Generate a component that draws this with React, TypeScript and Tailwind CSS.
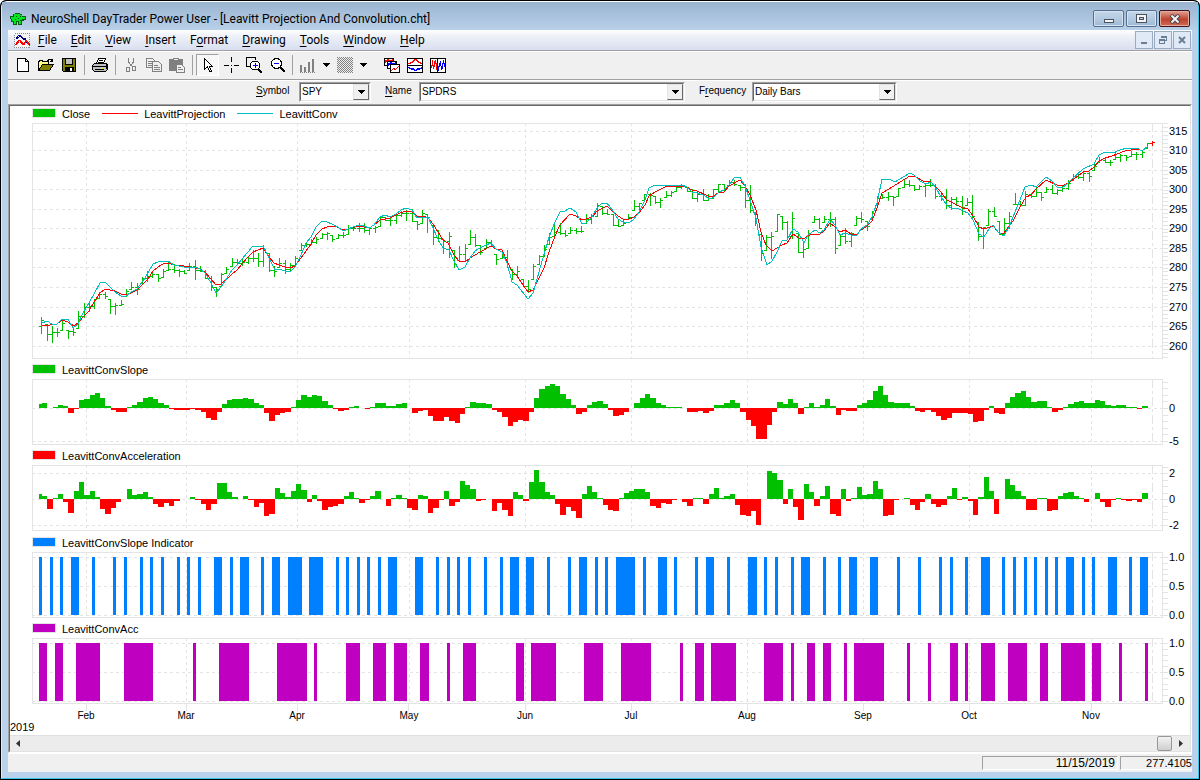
import type { ReactNode } from 'react';

// Chart space: x runs 32..1163, one session every 5.29 units
const STEP = 5.29;
const LEFT = 32;
const WIDTH = 1131;
const SESSIONS = 210;
const LAST_X = 1152;

const tickX = (i: number) => Math.round(41.3 + STEP * i);
const edgeX = (i: number) => Math.round(42 + STEP * i);
const priceY = (p: number) => Math.floor(131.3 + (315 - p) * 3.905);

const months = [
  { label: 'Feb', start: 9 },
  { label: 'Mar', start: 28 },
  { label: 'Apr', start: 49 },
  { label: 'May', start: 70 },
  { label: 'Jun', start: 92 },
  { label: 'Jul', start: 112 },
  { label: 'Aug', start: 134 },
  { label: 'Sep', start: 156 },
  { label: 'Oct', start: 176 },
  { label: 'Nov', start: 199 },
].map((m) => ({ ...m, x: Math.floor(38.7 + STEP * m.start) }));

// [high, low, close] per session
const bars = [
  [267.2, 263.2, 266.5], [265.5, 261.4, 262.9], [264.9, 261, 263.4], [264.5, 262.5, 263.6], [266.7, 264, 265.8],
  [264, 262, 263.8], [264.7, 262.6, 263.4], [268.8, 264.5, 267.6], [270.8, 267.2, 269.9], [271.3, 268.9, 270.1],
  [272, 269.5, 272], [273.6, 272.1, 273.1], [273.7, 272.1, 272.7], [271.8, 268.4, 270.1], [270.8, 268.1, 270.5],
  [271.6, 270.4, 270.6], [274.6, 272.7, 274.1], [276.3, 274.4, 275], [275.9, 273.3, 274.4], [277.5, 276.1, 277.4],
  [279, 276.5, 277.9], [279.2, 277.6, 278.4], [278.3, 276.5, 277.4], [279.5, 277.6, 279.1], [281.4, 279.4, 279.5],
  [280.8, 278.9, 279.3], [279.7, 277.8, 279.2], [279.3, 278.5, 278.7], [281.2, 279.3, 280.4], [282, 277, 279.4],
  [280.4, 279, 279], [279.3, 277.3, 277.3], [277.8, 274.2, 275], [274.9, 272.7, 274.5], [278.6, 275.3, 278.4],
  [280.2, 278.6, 279.5], [282.4, 280.5, 281.3], [282.1, 280.8, 281.2], [282.3, 280.7, 281.3], [282.9, 281.1, 282.3],
  [284.6, 281.6, 282.4], [283.6, 280.5, 281.6], [285.8, 280.5, 284.7], [283.6, 279.1, 279.3], [280.4, 277.8, 279],
  [282.3, 280, 281.1], [282, 278.5, 279.7], [281.2, 279.3, 280.7], [282.9, 280.4, 282.5], [286.3, 284.6, 285.8],
  [286.2, 285.5, 286], [287.3, 286, 286.4], [287.9, 286.2, 287.2], [288.9, 287.6, 288.6], [289.1, 287.4, 288.8],
  [288.2, 286.9, 287.3], [288.6, 287.5, 288.3], [289, 287.8, 288.2], [290.8, 288.5, 290.2], [290.6, 289.6, 290],
  [291.3, 289.3, 290.2], [291.5, 289.1, 289.5], [290.3, 288.7, 290], [290.6, 289.1, 290.3], [293.2, 290.6, 292.9],
  [293, 292.1, 292.2], [293.3, 291, 292.1], [294, 291.5, 293.4], [294.4, 293.3, 293.9], [294.7, 292.1, 294],
  [295, 291.8, 291.8], [291.9, 289.8, 291.2], [294.6, 291.5, 294], [293.8, 289.1, 292.8], [291, 285.9, 287.9],
  [289.5, 286.8, 287.5], [287.4, 283.6, 286.7], [289.2, 282.7, 288.1], [284.6, 280.2, 280.9], [285.4, 281.9, 283.4],
  [286, 281.7, 285.1], [289.5, 285.9, 287.7], [288.7, 285.5, 285.8], [285.7, 283.4, 284], [287.2, 285.1, 286.5],
  [287, 285.6, 285.6], [283.4, 280.8, 282.1], [284.2, 282.5, 282.8], [284.4, 280.2, 280.2], [279.5, 277, 278.3],
  [280.4, 278, 279], [277, 275.3, 275.3], [276.7, 273.6, 274.6], [280.8, 277, 280.5], [283.1, 280.8, 283],
  [285.7, 282.9, 284.8], [288.9, 285.9, 287.7], [290.9, 288, 289], [291.5, 288.5, 288.9], [289.5, 288, 288.4],
  [290.3, 288.8, 289.6], [290, 288.8, 289.3], [290.6, 289.2, 289.4], [293.8, 291.3, 292.4], [293.8, 291.5, 293.1],
  [296.4, 293.3, 295.9], [295.7, 293.8, 294], [294.9, 293.6, 293.6], [293.8, 290.8, 290.8], [292.3, 290.5, 290.5],
  [292.3, 291, 291.5], [293.8, 292.5, 293], [297.2, 294.6, 295.7], [296.6, 294.6, 296.4], [298.9, 297.2, 298.8],
  [299, 296.1, 298.5], [298.4, 296.6, 296.8], [297.7, 295.5, 297.2], [299.7, 298, 298.6], [299.7, 298.4, 299.3],
  [300.7, 299.5, 300.6], [301.3, 300.4, 300.8], [300.7, 299.7, 299.7], [300.2, 297.7, 297.7], [299.3, 297, 298.8],
  [300.2, 297.2, 297.2], [298.7, 297.2, 297.9], [300.2, 297.8, 300], [301.4, 299.4, 301.4], [301.4, 299.6, 300],
  [302.5, 301, 302], [302.3, 301.1, 301.5], [301.1, 299.8, 300.7], [301.5, 295.5, 297.4], [301, 294.2, 294.8],
  [294.2, 291, 292.6], [288.5, 281.9, 283.8], [288.2, 284.4, 287.8], [289, 282.5, 288], [293.8, 289.3, 293.6],
  [293.3, 289.9, 291.6], [291.8, 287.6, 288.1], [294.3, 287.6, 292.6], [288.9, 283.9, 283.9], [286.3, 282.7, 284.7],
  [289.5, 285.1, 288.9], [293.3, 291.7, 292.3], [292.6, 290, 290.1], [293.2, 291.7, 292.5], [294.2, 290.6, 292.4],
  [293, 283.8, 284.9], [288.7, 285.7, 288], [290.2, 286.3, 286.9], [289, 285.5, 288.9], [293.3, 291, 292.6],
  [294.3, 291.7, 292.5], [291.8, 289.6, 290.7], [294.4, 292.5, 294], [298.3, 296, 297.8], [298.7, 297.7, 298.1],
  [299.4, 297.4, 298.2], [298.4, 296.1, 298.1], [300.4, 298.3, 300.3], [302.5, 300.7, 301.3], [302.5, 300.8, 301.1],
  [301.1, 299.8, 300.2], [301.2, 300.1, 300.9], [301.5, 298.4, 301.1], [302.7, 300.8, 301.1], [301.5, 297.7, 298.3],
  [298.7, 297.4, 298.2], [300, 295.3, 295.9], [298.1, 294.9, 297.6], [298, 296.1, 297], [298.3, 293.8, 295.4],
  [297.8, 296.1, 296.8], [298.6, 292.7, 293.2], [291.6, 287, 288.1], [290.4, 284.9, 290.4], [294.9, 291, 294.4],
  [295.6, 293.1, 293.1], [292, 288.5, 288.5], [292.6, 288.6, 291.3], [294.3, 290.2, 293.2], [299, 296.3, 296.3],
  [297, 295.7, 296], [299.6, 296.1, 298.9], [299.1, 298.1, 298.4], [300.6, 298.4, 299.3], [299.4, 297.3, 298],
  [300.6, 299.4, 300], [301, 299, 299], [300.1, 298.7, 299.9], [301.1, 299.6, 300.4], [302.3, 300, 301.6],
  [304, 302.5, 303.3], [304.1, 303, 303.2], [304.7, 302.3, 304.1], [304.4, 302.1, 303.3], [306.4, 305, 306.1],
  [308.3, 307, 307.4], [308.1, 307, 307], [307.6, 306.3, 307.1], [309.9, 307.9, 308.2], [309.1, 307.2, 308.9],
  [308.7, 307.5, 308.4], [309.8, 308.5, 309], [309.5, 307.9, 309.1], [310.2, 308.2, 309.6], [311.9, 310.6, 311.8],
];

const leavittConv =
  '42,323 47,321 52,324 57,324 62,319 68,319 73,328 78,324 83,313 89,303 100,283 105,282 110,287 115,292 121,296 125,297 131,292 137,289 143,281 148,273 153,264 158,262 168,261 174,265 179,266 184,267 189,268 195,267 200,269 205,273 211,283 216,293 221,287 227,278 232,270 237,265 242,259 248,252 252,247 258,246 263,246 269,258 275,270 279,269 285,271 290,272 295,267 301,255 306,243 311,237 316,227 322,221 327,222 332,224 338,227 343,231 348,229 353,227 359,225 364,226 369,228 374,225 380,217 385,215 390,217 396,214 401,210 406,208 412,210 417,218 428,217 433,228 438,239 443,248 449,250 454,261 459,270 465,267 470,258 475,251 480,248 486,245 491,243 496,249 502,252 507,263 512,282 517,285 528,299 533,293 539,272 549,237 555,222 560,212 565,211 570,208 576,212 582,224 586,223 592,217 597,208 602,203 607,203 613,211 618,219 623,222 629,223 634,219 639,212 645,200 649,188 655,185 671,186 682,185 687,187 692,192 697,193 703,195 710,199 714,197 719,192 724,190 729,185 735,177 740,177 745,186 750,200 756,218 761,247 767,265 772,261 777,252 782,241 787,240 793,229 798,232 804,243 808,235 815,230 820,233 824,230 830,219 835,225 840,235 845,233 851,235 857,235 861,229 867,225 872,217 877,203 882,179 889,179 895,182 910,173 914,175 920,181 926,184 931,182 936,188 941,197 947,205 952,209 957,208 963,211 968,213 973,220 979,234 984,237 989,229 993,225 999,233 1004,236 1009,227 1015,212 1020,200 1025,187 1031,185 1036,187 1041,182 1046,177 1052,181 1057,187 1062,188 1068,183 1073,178 1083,169 1094,164 1099,155 1105,152 1112,153 1120,150 1127,148 1137,148 1142,151 1148,146';

const leavittProjection =
  '42,326 50,325 57,324 62,320 68,322 74,326 78,323 83,317 89,311 94,302 100,293 105,289 115,291 121,294 125,295 131,293 137,290 143,284 148,279 153,271 158,267 163,264 168,263 174,265 184,266 195,268 200,269 205,272 211,279 216,285 221,284 227,279 232,274 237,270 242,264 248,257 253,252 263,248 269,257 274,263 279,265 285,267 290,268 295,266 301,258 311,244 316,235 322,229 327,227 335,226 343,230 348,229 359,226 369,228 374,225 380,220 390,218 400,213 406,211 412,212 417,216 424,216 428,218 433,224 438,232 443,240 448,243 454,255 459,261 465,262 470,258 480,252 491,246 496,249 502,250 507,261 512,271 517,276 523,285 528,292 533,290 539,278 544,268 549,252 555,236 560,225 570,214 576,216 582,220 586,219 592,217 597,211 607,206 613,212 618,216 623,219 629,219 634,217 639,213 645,205 649,196 655,192 665,187 682,186 687,187 692,190 697,191 708,196 713,197 719,192 724,192 729,186 740,180 745,186 750,195 756,210 761,232 766,245 772,251 777,248 782,245 787,243 793,234 799,238 803,239 810,235 820,234 824,231 830,223 835,227 840,232 845,230 851,234 857,234 861,230 867,226 872,221 877,208 882,193 889,189 900,182 910,176 914,176 923,181 931,182 936,187 941,192 947,200 957,205 963,208 968,209 973,216 979,227 984,229 993,226 1000,234 1004,233 1013,221 1020,207 1026,197 1031,195 1036,189 1046,180 1057,185 1062,186 1070,182 1083,172 1089,171 1094,167 1099,161 1105,158 1112,156 1125,151 1138,149 1142,151';

// Histogram heights, one per session, negative below the zero line
const slope = [
  4, 5, 0, 1, 3, 2, -5, -1, 8, 9, 13, 15, 10, 2, -2, -4, -4, 1, 3, 6, 10, 11, 9, 5, 3, -1, -2, -2, -2, -1,
  -2, -4, -10, -12, -4, 4, 8, 9, 9, 10, 9, 5, 3, -5, -13, -7, -5, -4, 1, 8, 13, 11, 13, 12, 7, 3, -1, -3, -2, 1,
  2, 0, -1, 1, 5, 5, 2, 2, 4, 5, 0, -5, -3, -2, -8, -13, -13, -9, -13, -15, -6, 1, 6, 5, 5, 4, -2, -4, -9, -18,
  -14, -12, -13, -4, 10, 19, 22, 24, 22, 14, 9, 3, -6, -4, 3, 6, 7, 4, -2, -8, -7, -4, 0, 5, 10, 14, 10, 5, 3, 1,
  1, 1, 0, -4, -4, -3, -5, -3, 3, 3, 5, 8, 5, -4, -12, -18, -31, -31, -17, -4, 6, 4, 9, 5, -6, 1, 5, 1, 3, 9,
  2, -7, -2, -3, -3, 3, 5, 8, 17, 22, 13, 6, 5, 5, 5, 2, -3, -4, -2, -4, -8, -12, -10, -5, -5, -5, -6, -14, -13, -2,
  2, -5, -6, 5, 11, 15, 17, 11, 6, 7, 7, 1, -4, -2, 1, 4, 6, 7, 5, 5, 8, 7, 3, 2, 3, 3, 1, 1, -1, 2,
];

const acceleration = [
  5, 3, -10, 1, 5, -3, -14, 8, 17, 4, 8, 2, -10, -15, -9, -3, 0, 10, 4, 5, 7, 2, -5, -8, -4, -7, -2, 0, 0, 2,
  -1, -5, -11, -5, 16, 16, 7, 2, 0, 3, -1, -8, -4, -17, -15, 11, 6, 2, 8, 15, 9, -3, 4, -2, -11, -8, -7, -5, 3, 7,
  1, -4, -1, 3, 8, 0, -7, 1, 4, 1, -9, -11, 4, 3, -14, -9, -1, 8, -7, -3, 18, 14, 10, -2, -1, 0, -12, -4, -11, -17,
  7, 4, -2, 17, 29, 17, 7, 4, -5, -16, -8, -12, -19, 5, 13, 7, 1, -6, -11, -12, 1, 6, 8, 10, 10, 7, -7, -9, -4, -5,
  -1, 0, -3, -7, 1, 1, -5, 5, 11, 1, 3, 5, -6, -16, -17, -12, -26, 0, 28, 26, 19, -5, 10, -8, -21, 15, 7, -7, 3, 13,
  -15, -17, 10, -2, 1, 12, 4, 5, 18, 10, -17, -16, -1, 0, 1, -6, -11, -3, 5, -5, -8, -6, 3, 11, -1, 2, -2, -16, 2, 22,
  8, -15, 0, 20, 14, 8, 3, -11, -11, 1, 1, -12, -11, 3, 6, 7, 3, 1, -3, 0, 6, -3, -8, -1, 1, -1, -2, -1, -3, 6,
];

// [x, width] of each stretch where the signal is on
const slopeSignal = [
  [39, 3], [50, 3], [60, 3], [71, 8], [92, 3], [113, 3], [124, 3], [140, 3], [150, 3], [161, 3], [177, 3], [187, 3],
  [198, 3], [214, 8], [230, 3], [240, 9], [261, 3], [272, 8], [288, 14], [309, 14], [336, 3], [346, 3], [357, 3],
  [367, 3], [378, 3], [388, 9], [415, 8], [436, 3], [447, 3], [457, 3], [468, 3], [484, 3], [500, 3], [510, 9],
  [526, 8], [547, 3], [568, 3], [579, 8], [595, 3], [605, 3], [616, 19], [643, 3], [658, 9], [674, 3], [695, 3],
  [706, 8], [727, 3], [748, 9], [764, 3], [775, 3], [791, 3], [801, 9], [823, 3], [838, 3], [849, 8], [870, 8],
  [897, 3], [918, 3], [939, 3], [950, 3], [965, 3], [981, 9], [1002, 3], [1013, 3], [1024, 3], [1034, 3], [1045, 3],
  [1055, 3], [1066, 8], [1082, 3], [1092, 3], [1108, 9], [1129, 3], [1140, 8],
];

const accSignal = [
  [39, 8], [55, 8], [76, 24], [124, 29], [193, 3], [219, 30], [277, 30], [314, 3], [346, 14], [373, 13], [394, 13],
  [420, 9], [447, 3], [463, 13], [516, 8], [531, 25], [584, 19], [621, 30], [680, 3], [695, 9], [711, 25], [764, 19],
  [791, 3], [807, 8], [823, 8], [844, 3], [854, 30], [907, 3], [928, 3], [950, 8], [965, 3], [981, 14], [1008, 19],
  [1040, 8], [1061, 24], [1092, 9], [1119, 3], [1145, 3],
];

type AxisTick = { y: number; label: string };

const priceTicks: AxisTick[] = Array.from({ length: 12 }, (_, i) => ({ y: priceY(315 - i * 5), label: String(315 - i * 5) }));

function Plot({ top, height, ticks, minor, children }: {
  top: number;
  height: number;
  ticks: AxisTick[];
  minor: number;
  children: ReactNode;
}) {
  const minorTicks: number[] = [];
  for (let y = ticks[0].y; y > top; y -= minor) minorTicks.push(Math.round(y));
  for (let y = ticks[0].y; y < top + height - 1; y += minor) minorTicks.push(Math.round(y));

  return (
    <div className="flex">
      <svg
        className="block min-w-0 flex-1"
        height={height}
        viewBox={`${LEFT} ${top} ${WIDTH} ${height}`}
        preserveAspectRatio="none"
        shapeRendering="crispEdges"
      >
        <g stroke="#e4e4e4" fill="none">
          <rect x={LEFT + 0.5} y={top + 0.5} width={WIDTH - 1} height={height - 1} />
          {ticks.map((t) => (
            <line key={t.label} x1={LEFT} x2={LEFT + WIDTH} y1={t.y + 0.5} y2={t.y + 0.5} strokeDasharray="3 3" />
          ))}
          {months.map((m) => (
            <line key={m.label} x1={m.x + 0.5} x2={m.x + 0.5} y1={top} y2={top + height} strokeDasharray="3 3" />
          ))}
          <line x1={LAST_X + 0.5} x2={LAST_X + 0.5} y1={top} y2={top + height} strokeDasharray="9 3 3 3" />
        </g>
        {children}
      </svg>
      <svg className="block w-[27px] shrink-0" height={height} viewBox={`0 ${top} 27 ${height}`} overflow="visible">
        <g stroke="#e4e4e4" shapeRendering="crispEdges">
          {minorTicks.map((y, i) => (
            <line key={i} x1="0" x2="5" y1={y + 0.5} y2={y + 0.5} />
          ))}
        </g>
        {ticks.map((t) => (
          <text key={t.label} x="6" y={t.y + 4} className="text-[11px]">{t.label}</text>
        ))}
      </svg>
    </div>
  );
}

function Swatch({ className }: { className: string }) {
  return <span className={`h-2.5 w-6 border border-[#e4e4e4] ${className}`} />;
}

function LineKey({ color }: { color: string }) {
  return (
    <svg className="mt-px ml-3 block" width="36" height="2" shapeRendering="crispEdges">
      <rect width="36" height="1" fill={color} />
    </svg>
  );
}

function Legend({ swatch, label }: { swatch: string; label: string }) {
  return (
    <div className="flex h-5 items-center text-[11px] leading-4">
      <Swatch className={swatch} />
      <span className="ml-1.5 pt-0.5">{label}</span>
    </div>
  );
}

function PriceBars() {
  return (
    <g fill="#00c000">
      {bars.map(([high, low, close], i) => {
        const x = tickX(i);
        const prev = i ? bars[i - 1][2] : 265;
        const open = Math.min(high, Math.max(low, prev));
        return (
          <g key={i}>
            <rect x={x} y={priceY(high)} width="1" height={priceY(low) - priceY(high) + 1} />
            <rect x={x - 2} y={priceY(open)} width="2" height="1" />
            <rect x={x + 1} y={priceY(close)} width="2" height="1" />
          </g>
        );
      })}
    </g>
  );
}

function Histogram({ values, zero }: { values: number[]; zero: number }) {
  return (
    <g>
      {values.slice(0, SESSIONS).map((v, i) => {
        if (!v) return null;
        const x = i ? edgeX(i - 1) : edgeX(0) - 3;
        return (
          <rect
            key={i}
            x={x}
            y={v > 0 ? zero - v : zero}
            width={edgeX(i) - x}
            height={Math.abs(v)}
            fill={v > 0 ? '#00c000' : '#ff0000'}
          />
        );
      })}
    </g>
  );
}

function Signal({ runs, top, color }: { runs: number[][]; top: number; color: string }) {
  return (
    <g fill={color}>
      {runs.map(([x, w]) => (
        <rect key={x} x={x} y={top} width={w} height="58" />
      ))}
    </g>
  );
}

function MonthAxis() {
  return (
    <svg className="block h-4 w-full overflow-visible">
      {months.map((m) => {
        const x = `${((m.x - LEFT) / (WIDTH + 27)) * 100}%`;
        return (
          <g key={m.label}>
            <line x1={x} x2={x} y1="0" y2="7" stroke="#e4e4e4" shapeRendering="crispEdges" />
            <text x={x} y="15" textAnchor="middle" className="text-[10px]">{m.label}</text>
          </g>
        );
      })}
    </svg>
  );
}

function Chart() {
  return (
    <div className="flex-1 bg-white pl-[22px]">
      <div className="flex h-[17px] items-center pb-[3px] text-[11px] leading-4">
        <Swatch className="bg-[#00c000]" />
        <span className="ml-1.5 pt-0.5">Close</span>
        <LineKey color="#ff0000" />
        <span className="ml-1.5 pt-0.5">LeavittProjection</span>
        <LineKey color="#00c0c0" />
        <span className="ml-1.5 pt-0.5">LeavittConv</span>
      </div>
      <Plot top={123} height={236} ticks={priceTicks} minor={3.9}>
        <PriceBars />
        <polyline points={leavittProjection} fill="none" stroke="#ff0000" />
        <polyline points={leavittConv} fill="none" stroke="#00c0c0" />
        <path d="M1150 143.5h3M1152.5 141v5M1153 142.5h2" stroke="#ff0000" />
      </Plot>
      <Legend swatch="bg-[#00c000]" label="LeavittConvSlope" />
      <Plot top={379} height={66} ticks={[{ y: 408, label: '0' }, { y: 441, label: '-5' }]} minor={6.6}>
        <Histogram values={slope} zero={408} />
      </Plot>
      <Legend swatch="bg-[#ff0000]" label="LeavittConvAcceleration" />
      <Plot
        top={465}
        height={66}
        ticks={[{ y: 473, label: '2' }, { y: 499, label: '0' }, { y: 525, label: '-2' }]}
        minor={6.5}
      >
        <Histogram values={acceleration} zero={499} />
      </Plot>
      <div className="pt-px">
        <Legend swatch="bg-[#0080ff]" label="LeavittConvSlope Indicator" />
      </div>
      <Plot
        top={552}
        height={66}
        ticks={[{ y: 557, label: '1.0' }, { y: 586, label: '0.5' }, { y: 615, label: '0.0' }]}
        minor={5.8}
      >
        <Signal runs={slopeSignal} top={557} color="#0080ff" />
      </Plot>
      <Legend swatch="bg-[#c000c0]" label="LeavittConvAcc" />
      <Plot
        top={638}
        height={66}
        ticks={[{ y: 643, label: '1.0' }, { y: 672, label: '0.5' }, { y: 701, label: '0.0' }]}
        minor={5.8}
      >
        <Signal runs={accSignal} top={643} color="#c000c0" />
      </Plot>
      <MonthAxis />
      <div className="-ml-[22px] text-[11px] leading-[15px]">2019</div>
    </div>
  );
}

function Mnemonic({ text, at = 0 }: { text: string; at?: number }) {
  return (
    <>
      {text.slice(0, at)}
      <span className="underline underline-offset-2">{text[at]}</span>
      {text.slice(at + 1)}
    </>
  );
}

function TitleBar() {
  const glass = 'flex h-[17px] w-[31px] items-center justify-center rounded-xs border border-[#566f8f] bg-linear-to-b from-[#c5d7ea] via-[#b4cae1] via-50% to-[#9fb9d4] shadow-[inset_0_0_0_1px_#d5e4f3]';
  return (
    <header className="flex h-7 items-center bg-linear-to-b from-[#9ab4d0] to-[#b9d0e9] pt-[5px] pr-2 pl-[7px]">
      <svg width="18" height="16" viewBox="0 0 18 16" shapeRendering="crispEdges">
        <path d="M4 3h2V2h5v1h2v2h4v4h-2v1h-2v4h-4v-3H8v3H4v-3H2V8H1V5h3z" fill="#0a5c14" />
        <path d="M5 3h6v1h2v2h3v2h-3v1h-1v4h-2v-3H7v3H5v-3H3V8H2V6h3z" fill="#00e61c" />
        <path d="M7 5h1v1H7zM11 5h1v1h-1zM9 7h1v1H9zM6 8h1v1H6zM11 9h1v1h-1z" fill="#0a5c14" />
      </svg>
      <h1 className="ml-1 flex-1 truncate text-[12px] text-black">
        NeuroShell DayTrader Power User - [Leavitt Projection And Convolution.cht]
      </h1>
      <div className="flex gap-0.5">
        <button aria-label="Minimize" className={glass}>
          <svg width="12" height="12" viewBox="0 0 12 12" shapeRendering="crispEdges">
            <path d="M1.5 6.500h9v3h-9z" fill="#f4f4f4" stroke="#4a5260" />
          </svg>
        </button>
        <button aria-label="Maximize" className={glass}>
          <svg width="12" height="12" viewBox="0 0 12 12" shapeRendering="crispEdges">
            <path d="M.5 1.500h10v8H.5zM3.500 4.500h4v2h-4z" fill="#f4f4f4" fillRule="evenodd" stroke="#4a5260" />
          </svg>
        </button>
        <button
          aria-label="Close"
          className="flex h-[17px] w-[31px] items-center justify-center rounded-xs border border-[#43101c] bg-linear-to-b from-[#e0a294] via-[#bd4130] via-55% to-[#cf6b54] shadow-[inset_0_0_0_1px_#e2aba0]"
        >
          <svg width="12" height="10" viewBox="0 0 12 10">
            <path d="M2 1l8 8M10 1L2 9" stroke="#4a4450" strokeWidth="4" />
            <path d="M2.500 1.500l7 7M9.500 1.500l-7 7" stroke="#f4f4f4" strokeWidth="2" />
          </svg>
        </button>
      </div>
    </header>
  );
}

const menus = [
  { text: 'File' }, { text: 'Edit' }, { text: 'View' }, { text: 'Insert' }, { text: 'Format', at: 1 },
  { text: 'Drawing' }, { text: 'Tools' }, { text: 'Window' }, { text: 'Help' },
];

function MenuBar() {
  const mdi = 'flex h-[18px] w-[18px] items-center justify-center border border-[#9aabbf] bg-[#dfeaf6]';
  return (
    <nav className="flex h-5 items-center bg-linear-to-b from-white via-[#eef1f8] via-30% to-[#d9dff0] pr-px pl-[5px]">
      <svg width="18" height="17" viewBox="0 0 18 17" shapeRendering="crispEdges">
        <rect x="1.500" y="1.500" width="15" height="14" fill="#f4f4f4" stroke="#8a8a8a" strokeDasharray="1 1" />
        <path d="M3 7l3-4h1l3 3 2 0 2 4 3 3" stroke="#000080" fill="none" />
        <path d="M4 7l3-3 3 3 2 0 2 4 3 3" stroke="#000080" fill="none" />
        <path d="M2 13l4-5 4 5 3-5 4 4" stroke="#ff0000" fill="none" />
        <path d="M3 13l4-5 4 5 2-4 4 5" stroke="#ff0000" fill="none" />
      </svg>
      <div className="flex flex-1">
        {menus.map((m) => (
          <button key={m.text} className="px-[7px] text-[12px] leading-5">
            <Mnemonic text={m.text} at={m.at} />
          </button>
        ))}
      </div>
      <div className="flex gap-px">
        <button aria-label="Minimize chart" className={mdi}>
          <svg width="8" height="8" viewBox="0 0 8 8"><path d="M1 6h6v2H1z" fill="#6b7d92" /></svg>
        </button>
        <button aria-label="Restore chart" className={mdi}>
          <svg width="8" height="8" viewBox="0 0 8 8" fill="none" stroke="#6b7d92" shapeRendering="crispEdges">
            <path d="M2.500 2V.5h5v4H6M2 1h6M.5 3.500h5v4h-5zM0 4h6" />
          </svg>
        </button>
        <button aria-label="Close chart" className={mdi}>
          <svg width="8" height="8" viewBox="0 0 8 8"><path d="M1 1l6 6M7 1L1 7" stroke="#6b7d92" strokeWidth="2" /></svg>
        </button>
      </div>
    </nav>
  );
}

function Tool({ label, children, pressed }: { label: string; children: ReactNode; pressed?: boolean }) {
  return (
    <button
      aria-label={label}
      aria-pressed={pressed}
      className={`flex h-[22px] w-[23px] items-center justify-center border ${
        pressed ? 'border-[#a0a0a0] border-r-white border-b-white bg-[#f7f7f7]' : 'border-transparent'
      }`}
    >
      <svg width="16" height="16" viewBox="0 0 16 16" fill="none" stroke="#000" shapeRendering="crispEdges" className="shrink-0">
        {children}
      </svg>
    </button>
  );
}

function DropArrow({ label }: { label: string }) {
  return (
    <button aria-label={label} className="flex h-[22px] w-[14px] items-center justify-center">
      <svg width="7" height="4" viewBox="0 0 7 4" shapeRendering="crispEdges"><path d="M0 0h7v1H6v1H5v1H4v1H3V3H2V2H1V1H0z" /></svg>
    </button>
  );
}

function Separator() {
  return <span className="mt-px mr-[3px] ml-1 h-5 w-px bg-[#a0a0a0]" />;
}

function Toolbar() {
  return (
    <div className="flex h-[29px] items-start border-t border-b border-t-white border-b-[#a0a0a0] pt-0.5 pl-[3px]">
      <Tool label="New">
        <path d="M2.500 1.500h8l3 3v10h-11zM10.500 1.500v3h3" fill="#fff" />
      </Tool>
      <Tool label="Open">
        <path d="M.5 13.500v-9h1v-1h3v1h6v3" fill="#ffff80" />
        <path d="M.5 13.500l4-6h11l-4 6z" fill="#808000" />
        <path d="M9 3.500h1v-1h3v1h1v1M14.500 2v3M12 4.500h3" />
      </Tool>
      <Tool label="Save">
        <path d="M1.500 1.500h13v13h-12l-1-1z" fill="#808000" />
        <path d="M4.500 1.500h7v6h-7z" fill="#c0c0c0" />
        <path d="M4 10h8v4H4z" fill="#000" />
        <path d="M9 11h2v3H9z" fill="#fff" stroke="none" />
      </Tool>
      <Separator />
      <Tool label="Print">
        <path d="M4.500 6.500l2-5h7l-2 5z" fill="#fff" />
        <path d="M7 3.500h4M6 5.500h5" />
        <path d="M.5 8.500l2-2h12l1 2v4l-2 2h-11l-2-2z" fill="#c0c0c0" />
        <path d="M1 9.500h13M3 12.500h9M14.500 7v5M2 14.500h11" />
        <path d="M9 11h2v1H9z" fill="#ffff00" stroke="none" />
      </Tool>
      <Separator />
      <Tool label="Cut">
        <path d="M5.500 1v4l3 4M10.500 1v4l-3 4" stroke="#808080" />
        <path d="M3.500 10.500h3v4h-3zM9.500 9.500h3v4h-3z" stroke="#808080" />
      </Tool>
      <Tool label="Copy">
        <path d="M.5 1.500h6l2 2v7h-8zM2 4.500h4M2 6.500h4M2 8.500h4" stroke="#808080" />
        <path d="M6.500 4.500h6l3 3v7h-9zM8 8.500h4M8 10.500h6M8 12.500h6" fill="#efefef" stroke="#808080" />
      </Tool>
      <Tool label="Paste">
        <path d="M.5 2.500h13v11H.5z" fill="#808080" stroke="#808080" />
        <path d="M4.500 1.500h5v2h-5z" fill="#efefef" stroke="#808080" />
        <path d="M7.500 7.500h5l3 3v5h-8zM9 10.500h3M9 12.500h5" fill="#efefef" stroke="#808080" />
      </Tool>
      <Separator />
      <Tool label="Select" pressed>
        <path d="M4.500 1.500v11l3-3 2 5h2l-2-5h3z" fill="#fff" />
      </Tool>
      <Tool label="Crosshair">
        <path d="M8.500 0v5M8.500 11v5M1 8.500h5M11 8.500h5M8 8.500h1" />
      </Tool>
      <Tool label="Zoom in">
        <path d="M4 9.500H.5v-9h9V3" />
        <circle cx="9" cy="8.500" r="4.500" fill="#fff" />
        <path d="M12 12l4 4" strokeWidth="2" />
        <path d="M7 8.500h5M9.500 6v5" stroke="#0000ff" />
      </Tool>
      <Tool label="Zoom out">
        <circle cx="7.500" cy="6.500" r="5" fill="#fff" />
        <path d="M11 10l5 5" strokeWidth="2" />
        <path d="M5 6.500h5" stroke="#0000ff" />
      </Tool>
      <Separator />
      <Tool label="Chart type">
        <path d="M1 8v7M5 10v5M9 5v10M13 2v13" stroke="#808080" strokeWidth="2" />
        <path d="M0 15.500h15" stroke="#808080" strokeDasharray="1 1" />
      </Tool>
      <DropArrow label="Chart type options" />
      <Tool label="Pattern">
        <pattern id="hatch" width="2" height="2" patternUnits="userSpaceOnUse">
          <path d="M0 0h1v1H0zM1 1h1v1H1z" fill="#808080" stroke="none" />
        </pattern>
        <rect width="16" height="16" fill="url(#hatch)" stroke="none" />
      </Tool>
      <DropArrow label="Pattern options" />
      <span className="w-2.5" />
      <Tool label="Cascade charts">
        <path d="M.5 1.500h9v7h-9z" fill="#fff" />
        <path d="M1 5l3-2 2 2 3-2" stroke="#ff0000" strokeWidth="2" />
        <path d="M3.500 4.500h9v7h-9z" fill="#fff" />
        <path d="M4 8l3-2 2 2 3-2" stroke="#0000ff" strokeWidth="2" />
        <path d="M6.500 7.500h9v8h-9z" fill="#fff" />
        <path d="M7 14l3-3 1 2 4-4" stroke="#ff0000" />
      </Tool>
      <Tool label="Stack charts">
        <path d="M.5 1.500h15v14H.5zM0 8.500h16" fill="#fff" />
        <path d="M1 6.500h2v-1h2v-1h1v-1h1v-1h2v1h1v1h1v1h2v1h2" stroke="#ff0000" />
        <path d="M1 10.500h1v1h2v1h1v-1h1v1h1v1h2v-1h1v-1h1v1h1v-1h2v-1h1" stroke="#0000ff" />
      </Tool>
      <Tool label="Split charts">
        <path d="M.5 1.500h15v14H.5zM7.500 1v15" fill="#fff" />
        <path d="M1.500 8v3M2.500 3v6M3.500 8v4M4.500 4v6M5.500 3v4M6.500 6v7" stroke="#ff0000" />
        <path d="M8.500 9v5M9.500 6v4M10.500 4v5M11.500 9v4M12.500 6v6M13.500 3v4M14.500 6v4" stroke="#0000ff" />
      </Tool>
    </div>
  );
}

function Combo({ id, value, className }: { id: string; value: string; className: string }) {
  return (
    <div className={`relative h-5 border border-[#a0a0a0] border-r-white border-b-white ${className}`}>
      <select
        id={id}
        defaultValue={value}
        className="block h-full w-full appearance-none border border-[#696969] border-r-[#e3e3e3] border-b-[#e3e3e3] bg-white pl-px text-[10px] leading-4"
      >
        <option>{value}</option>
      </select>
      <span className="pointer-events-none absolute top-px right-px bottom-px flex w-4 items-center justify-center border border-[#e3e3e3] border-r-[#696969] border-b-[#696969] bg-[#f0f0f0]">
        <svg width="7" height="4" viewBox="0 0 7 4" shapeRendering="crispEdges"><path d="M0 0h7v1H6v1H5v1H4v1H3V3H2V2H1V1H0z" /></svg>
      </span>
    </div>
  );
}

function SymbolBar() {
  return (
    <div className="flex h-6 items-start border-t border-white pt-px pl-[248px] text-[10px] leading-[17px]">
      <label htmlFor="symbol" className="w-[43px]"><Mnemonic text="Symbol" /></label>
      <Combo id="symbol" value="SPY" className="w-[72px]" />
      <label htmlFor="name" className="ml-[14px] w-[34px]"><Mnemonic text="Name" /></label>
      <Combo id="name" value="SPDRS" className="w-[266px]" />
      <label htmlFor="frequency" className="ml-[14px] w-[53px]"><Mnemonic text="Frequency" at={1} /></label>
      <Combo id="frequency" value="Daily Bars" className="w-[145px]" />
    </div>
  );
}

function ScrollBar() {
  return (
    <div className="flex h-4 items-stretch border-t border-[#e0e0e0] bg-[#ececec]">
      <button aria-label="Scroll left" className="flex w-4 items-center justify-center">
        <svg width="4" height="7" viewBox="0 0 4 7"><path d="M4 0v7L0 3.500z" fill="#333" /></svg>
      </button>
      <span className="flex-1" />
      <span className="w-[15px] rounded-xs border border-[#979797] bg-linear-to-b from-[#f3f3f3] to-[#cfcfcf]" />
      <button aria-label="Scroll right" className="flex w-[18px] items-center justify-center">
        <svg width="4" height="7" viewBox="0 0 4 7"><path d="M0 0v7l4-3.500z" fill="#333" /></svg>
      </button>
    </div>
  );
}

function StatusBar() {
  const cell = 'h-[14px] border border-[#a0a0a0] border-r-white border-b-white text-right leading-[13px]';
  return (
    <footer className="flex h-[19px] items-center justify-end gap-0.5 border-t border-white">
      <span className={`${cell} w-[136px] pr-0.5 text-[12px]`}>11/15/2019</span>
      <span className={`${cell} w-[72px] border-r-0 text-[11px]`}>277.4105</span>
    </footer>
  );
}

export default function App() {
  return (
    <div className="flex min-h-screen flex-col rounded-t-md border border-b-2 border-black bg-black font-['Liberation_Sans',Arial,sans-serif] text-black">
      <div className="flex flex-1 flex-col rounded-t-md border border-t-white border-r-[#35c3e6] border-b-[#35c3e6] border-l-[#dfeaf6] bg-[#b9d1ea]">
        <div className="font-['Roboto',sans-serif]">
          <TitleBar />
        </div>
        <div className="mr-1.5 mb-1.5 ml-1.5 flex flex-1 flex-col bg-[#f0f0f0]">
          <div className="border-b border-[#a0a0a0] font-['Roboto',sans-serif]">
            <MenuBar />
          </div>
          <Toolbar />
          <SymbolBar />
          <main className="flex flex-1 flex-col border border-[#a0a0a0] border-r-white border-b-white">
            <div className="flex flex-1 flex-col border border-[#696969] border-r-[#e3e3e3] border-b-[#e3e3e3]">
              <Chart />
              <ScrollBar />
            </div>
          </main>
          <StatusBar />
        </div>
      </div>
    </div>
  );
}
